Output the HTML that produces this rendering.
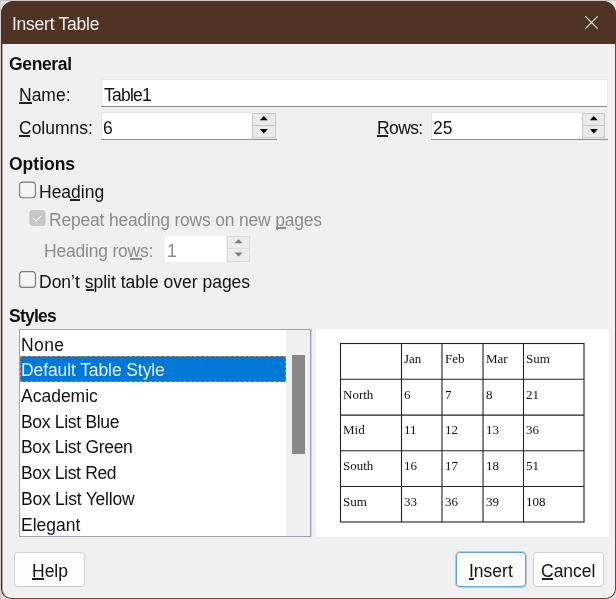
<!DOCTYPE html>
<html><head><meta charset="utf-8">
<style>
html,body{margin:0;padding:0;}
body{width:616px;height:599px;background:#e2e1e0;position:relative;overflow:hidden;}
#win{position:absolute;left:1px;top:1px;width:615px;height:598px;box-sizing:border-box;border:1px solid #4e3023;border-radius:13px 13px 10px 10px;background:#f0f0f0;overflow:hidden;box-shadow:inset 1px 0 0 #aaa4a0, inset 2px 0 0 #f8f9fb, inset 0 -1px 0 #f6f7f8;border-right-color:#654839;border-bottom-color:#654839;}
#title{position:absolute;left:0;top:0;width:616px;height:43px;background:#4f3326;}
.a{position:absolute;}
.t{will-change:transform;position:absolute;font-family:"Liberation Sans",sans-serif;font-size:17.5px;line-height:20px;white-space:nowrap;color:#111;}
.b{font-weight:bold;}
.g{color:#8b8b8b;}
.u{position:absolute;height:2px;background:#222;}
.entry{position:absolute;background:#fff;box-shadow:0 -1px 0 #e6e6e6, -1px 0 0 #e8e8e8, 1px 0 0 #e8e8e8;}
.eline{position:absolute;height:1px;background:#8c8c8c;}
.spb{position:absolute;box-sizing:border-box;border:1px solid #c6c6c6;background:#eaeaea;}
.btn{position:absolute;box-sizing:border-box;border:1px solid #d4d4d4;border-bottom-color:#c9c9c9;border-radius:4px;background:#fdfdfd;}
.serif{will-change:transform;position:absolute;font-family:"Liberation Serif",serif;font-size:13px;line-height:16px;white-space:nowrap;color:#111;}
</style></head><body>
<div class="a" style="left:0;top:0;width:616px;height:1px;background:#c9c6c4;"></div>
<div class="a" style="left:0;top:0;width:1px;height:599px;background:#cfcccb;"></div>
<div id="win"></div>
<!-- title bar drawn in body coordinates -->
<div class="a" style="left:1px;top:1px;width:615px;height:43px;background:#4f3326;border-radius:13px 13px 0 0;"></div>
<div class="t" style="left:12px;top:14px;color:#f3eeea;letter-spacing:-0.25px;">Insert Table</div>
<svg class="a" style="left:580px;top:11px" width="24" height="24" viewBox="0 0 24 24"><path d="M5.4 5.4 L17.6 17.6 M17.6 5.4 L5.4 17.6" stroke="#f3eeea" stroke-width="1.15" fill="none"/></svg>

<!-- General -->
<div class="t b" style="left:9px;top:54px;letter-spacing:-0.35px;">General</div>
<div class="t" style="left:19px;top:85px;">Name:</div>
<div class="u" style="left:19px;top:102px;width:13px;"></div>
<div class="entry" style="left:102px;top:80px;width:505px;height:26px;"></div>
<div class="eline" style="left:101px;top:106px;width:506px;"></div>
<div class="t" style="left:104px;top:85px;letter-spacing:-0.75px;">Table1</div>

<div class="t" style="left:19px;top:118px;">Columns:</div>
<div class="u" style="left:19px;top:135px;width:11px;"></div>
<div class="entry" style="left:102px;top:113px;width:150px;height:26px;"></div>
<div class="eline" style="left:101px;top:139px;width:176px;"></div>
<div class="spb" style="left:252px;top:113px;width:24px;height:13px;"></div>
<div class="spb" style="left:252px;top:125px;width:24px;height:13px;"></div>
<svg class="a" style="left:252px;top:113px" width="24" height="26"><path d="M7.8 7.3 L11.8 3 L15.8 7.3 Z M7.8 16 L11.8 20.5 L15.8 16 Z" fill="#000"/></svg>
<div class="t" style="left:103px;top:118px;">6</div>

<div class="t" style="left:377px;top:118px;letter-spacing:-0.6px;">Rows:</div>
<div class="u" style="left:377px;top:135px;width:11px;"></div>
<div class="entry" style="left:432px;top:113px;width:150px;height:26px;"></div>
<div class="eline" style="left:431px;top:139px;width:177px;"></div>
<div class="spb" style="left:582px;top:113px;width:23px;height:13px;"></div>
<div class="spb" style="left:582px;top:125px;width:23px;height:13px;"></div>
<svg class="a" style="left:581.5px;top:113px" width="24" height="26"><path d="M7.8 7.3 L11.8 3 L15.8 7.3 Z M7.8 16 L11.8 20.5 L15.8 16 Z" fill="#000"/></svg>
<div class="t" style="left:433px;top:118px;">25</div>

<!-- Options -->
<div class="t b" style="left:9px;top:154px;">Options</div>
<svg class="a" style="left:16px;top:178px" width="24" height="24"><rect x="3.6" y="4.1" width="15.8" height="15.6" rx="3" ry="3" fill="#f4f4f4" stroke="#7a7a7a" stroke-width="1.1"/></svg>
<div class="t" style="left:39px;top:182px;">Heading</div>
<div class="u" style="left:70px;top:199px;width:10px;"></div>

<svg class="a" style="left:26px;top:206px" width="24" height="24"><rect x="3.3" y="3.9" width="16.2" height="16.1" rx="3.2" ry="3.2" fill="#c6c6c6"/><path d="M7 12.4 L10 14.8 L15.4 9.8" stroke="#fff" stroke-width="1.1" fill="none"/></svg>
<div class="t g" style="left:49px;top:210px;letter-spacing:-0.2px;">Repeat heading rows on new pages</div>
<div class="u" style="left:276px;top:227px;width:10px;background:#8b8b8b;"></div>
<div class="u" style="left:130px;top:258px;width:12px;background:#8b8b8b;"></div>
<div class="t g" style="left:44px;top:241px;letter-spacing:-0.2px;">Heading rows:</div>
<div class="a" style="left:165px;top:236px;width:61px;height:26px;background:#fff;"></div>
<div class="spb" style="left:227px;top:236px;width:23px;height:13px;border-color:#dcdcdc;background:#ececec;"></div>
<div class="spb" style="left:227px;top:248px;width:23px;height:14px;border-color:#dcdcdc;background:#ececec;"></div>
<svg class="a" style="left:227px;top:236px" width="23" height="26"><path d="M7.5 7.3 L11.5 3.3 L15.5 7.3 Z M7.5 16.5 L11.5 20.5 L15.5 16.5 Z" fill="#7a7a7a"/></svg>
<div class="t g" style="left:167px;top:241px;">1</div>

<svg class="a" style="left:16px;top:268px" width="24" height="24"><rect x="3.6" y="3.6" width="15.8" height="15.8" rx="3" ry="3" fill="#f4f4f4" stroke="#7a7a7a" stroke-width="1.1"/></svg>
<div class="t" style="left:39px;top:272px;">Don’t split table over pages</div>
<div class="u" style="left:86px;top:289px;width:8px;"></div>

<!-- Styles -->
<div class="t b" style="left:9px;top:306px;letter-spacing:-0.75px;">Styles</div>
<div class="a" style="left:19px;top:329px;width:292px;height:208px;box-sizing:border-box;border:1px solid #a0a5ad;background:#fff;box-shadow:1px 0 0 #cfd2d6;"></div>
<div class="a" style="left:286px;top:330px;width:24px;height:206px;background:#f0f0f0;"></div>
<div class="a" style="left:292px;top:355px;width:13px;height:99px;background:#888;"></div>
<div class="a" style="left:20px;top:356px;width:266px;height:26px;box-sizing:border-box;background:#0078d7;border:1px dashed #b98b5d;"></div>
<div class="t" style="left:21px;top:335px;letter-spacing:0.4px;">None</div>
<div class="t" style="left:21px;top:360px;color:#e4f1fc;letter-spacing:-0.1px;">Default Table Style</div>
<div class="t" style="left:21px;top:386px;">Academic</div>
<div class="t" style="left:21px;top:412px;letter-spacing:-0.3px;">Box List Blue</div>
<div class="t" style="left:21px;top:437px;letter-spacing:-0.3px;">Box List Green</div>
<div class="t" style="left:21px;top:463px;letter-spacing:-0.33px;">Box List Red</div>
<div class="t" style="left:21px;top:489px;letter-spacing:-0.23px;">Box List Yellow</div>
<div class="t" style="left:21px;top:515px;">Elegant</div>

<!-- preview -->
<div class="a" style="left:316px;top:329px;width:293px;height:208px;background:#fff;"></div>
<svg class="a" style="left:316px;top:329px" width="292" height="207">
<g stroke="#222" stroke-width="1.1" fill="none">
<rect x="24.5" y="14.5" width="243.5" height="178.5"/>
<path d="M85.5 14.5 V193 M126 14.5 V193 M167 14.5 V193 M207.5 14.5 V193"/>
<path d="M24.5 50.3 H268 M24.5 86.1 H268 M24.5 121.8 H268 M24.5 157.5 H268"/>
</g>
</svg>
<div class="serif" style="left:404px;top:351px;">Jan</div>
<div class="serif" style="left:445px;top:351px;">Feb</div>
<div class="serif" style="left:486px;top:351px;">Mar</div>
<div class="serif" style="left:526px;top:351px;">Sum</div>
<div class="serif" style="left:343px;top:387px;">North</div>
<div class="serif" style="left:404px;top:387px;">6</div>
<div class="serif" style="left:445px;top:387px;">7</div>
<div class="serif" style="left:486px;top:387px;">8</div>
<div class="serif" style="left:526px;top:387px;">21</div>
<div class="serif" style="left:343px;top:422px;">Mid</div>
<div class="serif" style="left:404px;top:422px;">11</div>
<div class="serif" style="left:445px;top:422px;">12</div>
<div class="serif" style="left:486px;top:422px;">13</div>
<div class="serif" style="left:526px;top:422px;">36</div>
<div class="serif" style="left:343px;top:458px;">South</div>
<div class="serif" style="left:404px;top:458px;">16</div>
<div class="serif" style="left:445px;top:458px;">17</div>
<div class="serif" style="left:486px;top:458px;">18</div>
<div class="serif" style="left:526px;top:458px;">51</div>
<div class="serif" style="left:343px;top:494px;">Sum</div>
<div class="serif" style="left:404px;top:494px;">33</div>
<div class="serif" style="left:445px;top:494px;">36</div>
<div class="serif" style="left:486px;top:494px;">39</div>
<div class="serif" style="left:526px;top:494px;">108</div>

<!-- buttons -->
<div class="btn" style="left:14px;top:552px;width:71px;height:35px;"></div>
<div class="t" style="left:32px;top:561px;">Help</div>
<div class="u" style="left:32px;top:578px;width:12px;"></div>
<div class="btn" style="left:455px;top:551px;width:72px;height:37px;border:1px solid #a8cdee;border-radius:5px;box-shadow:inset 0 0 0 1px #5ba3e3;"></div>
<div class="t" style="left:469px;top:561px;">Insert</div>
<div class="u" style="left:469px;top:578px;width:5px;"></div>
<div class="btn" style="left:533px;top:552px;width:71px;height:35px;"></div>
<div class="t" style="left:541px;top:561px;">Cancel</div>
<div class="u" style="left:542px;top:578px;width:11px;"></div>
</body></html>
